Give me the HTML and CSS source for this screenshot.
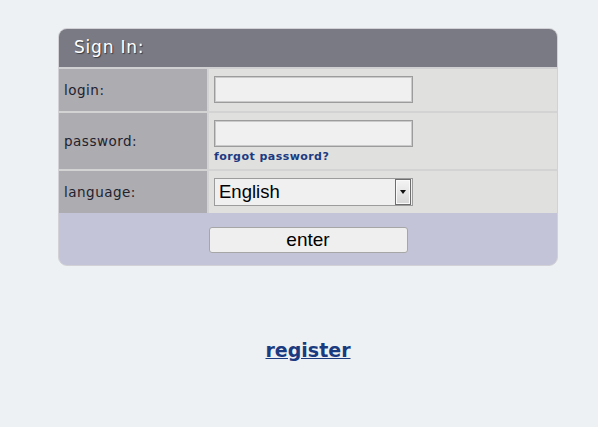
FILE: index.html
```html
<!DOCTYPE html>
<html>
<head>
<meta charset="utf-8">
<link rel="stylesheet" href="styles.css">
</head>
<body>
<div class="page">
  <form class="box">
    <div class="head">Sign In:</div>
    <div class="grid">
      <div class="label row-a">login:</div>
      <div class="value row-a"><input class="field" type="text"></div>
      <div class="label row-b">password:</div>
      <div class="value row-b">
        <input class="field" type="password">
        <a class="forgot" href="#">forgot password?</a>
      </div>
      <div class="label row-a">language:</div>
      <div class="value row-a">
        <div class="select">
          <span class="sel-text">English</span>
          <span class="sel-btn"><span class="tri"></span></span>
        </div>
      </div>
    </div>
    <div class="foot"><button class="enter" type="button">enter</button></div>
  </form>
  <div class="reg"><a href="#">register</a></div>
</div>
</body>
</html>
```

FILE: styles.css
```css
html, body {
  margin: 0;
  padding: 0;
  background: #eef1f4;
}
.page {
  padding: 28px 0 0 58px;
  width: 500px;
}
.box {
  display: block;
  margin: 0;
  width: 498px;
  border: 1px solid #d2d2d6;
  border-radius: 9px;
  overflow: hidden;
  background: #d2d2d5;
}
.head {
  height: 38px;
  background: #7a7a84;
  color: #fff;
  font-family: "DejaVu Sans", Verdana, sans-serif;
  font-size: 17px;
  letter-spacing: 0.8px;
  line-height: 37px;
  padding-left: 15px;
  text-shadow: 1px 1px 1px #3a3a40;
  border-bottom: 2px solid #d0d0d3;
}
.grid {
  display: grid;
  grid-template-columns: 148px 1fr;
  column-gap: 2px;
  row-gap: 2px;
  background: #d3d3d4;
}
.label {
  background: #adacb0;
  color: #22222e;
  font-family: "DejaVu Sans", Verdana, sans-serif;
  font-size: 13.5px;
  letter-spacing: 0.5px;
  padding-left: 5px;
  display: flex;
  align-items: center;
}
.value {
  background: #e0e0de;
  padding: 7px 5px 0 5px;
}
.row-a { height: 42px; box-sizing: border-box; }
.row-b { height: 56px; box-sizing: border-box; }
.field {
  display: block;
  box-sizing: border-box;
  width: 199px;
  height: 27px;
  margin: 0;
  border: 1px solid #9c9c9c;
  box-shadow: inset 0 0 0 1px #cacaca;
  background: #f0f0f0;
  outline: none;
}
.forgot {
  display: block;
  margin-top: 3px;
  font-family: "DejaVu Sans", Verdana, sans-serif;
  font-weight: bold;
  font-size: 11px;
  letter-spacing: 0.45px;
  color: #1c3a82;
  text-decoration: none;
  line-height: 14px;
}
.select {
  box-sizing: border-box;
  width: 199px;
  height: 28px;
  border: 1px solid #9c9c9c;
  background: #f0f0f0;
  display: flex;
  align-items: center;
  justify-content: space-between;
  padding: 0 1px 0 4px;
}
.sel-text {
  font-family: "Liberation Sans", Arial, sans-serif;
  font-size: 18.5px;
  color: #000;
}
.sel-btn {
  box-sizing: border-box;
  width: 16px;
  height: 26px;
  border: 1px solid #6e6e6e;
  box-shadow: inset 0 0 0 1px #fafafa;
  background: linear-gradient(#f4f4f4, #e6e6e6 50%, #d6d6d6);
  display: flex;
  align-items: center;
  justify-content: center;
}
.tri {
  width: 0;
  height: 0;
  border-left: 3.5px solid transparent;
  border-right: 3.5px solid transparent;
  border-top: 4px solid #111;
}
.foot {
  background: #c4c4d9;
  height: 52px;
  display: flex;
  justify-content: center;
  align-items: flex-start;
  padding-top: 14px;
  box-sizing: border-box;
}
.enter {
  box-sizing: border-box;
  width: 199px;
  height: 26px;
  margin: 0;
  border: 1px solid #a6a6a6;
  border-radius: 3px;
  background: #efefef;
  font-family: "Liberation Sans", Arial, sans-serif;
  font-size: 19px;
  line-height: 22px;
  color: #000;
  padding: 0;
}
.reg {
  margin-top: 73px;
  width: 500px;
  text-align: center;
  font-family: "DejaVu Sans", Verdana, sans-serif;
  font-weight: bold;
  font-size: 19px;
}
.reg a {
  color: #1a3b80;
  text-decoration: underline;
}
```
